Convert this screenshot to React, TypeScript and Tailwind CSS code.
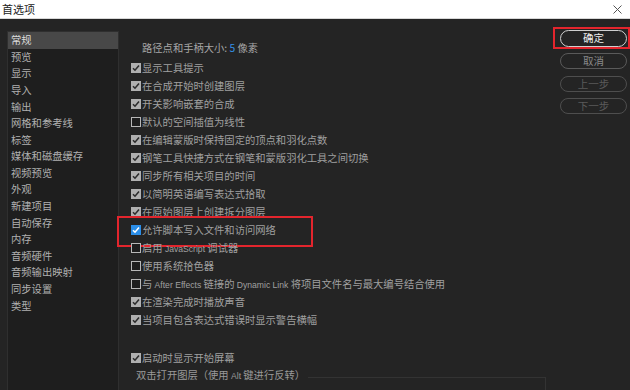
import React from "react";

type Row = { text: string; state: "on" | "off" | "blue" };

const rows: Row[] = [
  { text: "显示工具提示", state: "on" },
  { text: "在合成开始时创建图层", state: "on" },
  { text: "开关影响嵌套的合成", state: "on" },
  { text: "默认的空间插值为线性", state: "off" },
  { text: "在编辑蒙版时保持固定的顶点和羽化点数", state: "on" },
  { text: "钢笔工具快捷方式在钢笔和蒙版羽化工具之间切换", state: "on" },
  { text: "同步所有相关项目的时间", state: "on" },
  { text: "以简明英语编写表达式拾取", state: "on" },
  { text: "在原始图层上创建拆分图层", state: "on" },
  { text: "允许脚本写入文件和访问网络", state: "blue" },
  { text: "启用 JavaScript 调试器", state: "off" },
  { text: "使用系统拾色器", state: "off" },
  { text: "与 After Effects 链接的 Dynamic Link 将项目文件名与最大编号结合使用", state: "off" },
  { text: "在渲染完成时播放声音", state: "on" },
  { text: "当项目包含表达式错误时显示警告横幅", state: "on" },
];

const side = [
  "常规",
  "预览",
  "显示",
  "导入",
  "输出",
  "网格和参考线",
  "标签",
  "媒体和磁盘缓存",
  "视频预览",
  "外观",
  "新建项目",
  "自动保存",
  "内存",
  "音频硬件",
  "音频输出映射",
  "同步设置",
  "类型",
];

function Mixed({ text }: { text: string }) {
  const parts = text.split(/([A-Za-z][A-Za-z ]*[A-Za-z]|[A-Za-z])/);
  return (
    <>
      {parts.map((p, i) =>
        /^[A-Za-z]/.test(p) ? (
          <span
            key={i}
            className="text-[8.6px]"
            style={{ fontFamily: '"Liberation Sans", Arial, sans-serif' }}
          >
            {p}
          </span>
        ) : (
          <React.Fragment key={i}>{p}</React.Fragment>
        )
      )}
    </>
  );
}

function Box({ state }: { state: Row["state"] }) {
  if (state === "off") {
    return <div className="w-[10px] h-[10px] shrink-0 border border-[#b8b8b8] bg-[#1e1e1e]" />;
  }
  const blue = state === "blue";
  return (
    <div
      className={
        blue
          ? "w-[10px] h-[10px] shrink-0 bg-[#2b8ee8] flex items-center justify-center"
          : "w-[10px] h-[10px] shrink-0 bg-[#b0b0b0] flex items-center justify-center"
      }
    >
      <svg width="8" height="8" viewBox="0 0 8 8">
        <path
          d="M1 4.2 L3 6.2 L7 1.6"
          fill="none"
          stroke={blue ? "#ffffff" : "#2c2c2c"}
          strokeWidth="1.6"
        />
      </svg>
    </div>
  );
}

function CheckRow({ row, children }: { row: Row; children?: React.ReactNode }) {
  return (
    <div className="relative h-[18px] flex items-center gap-[1px]">
      <Box state={row.state} />
      <span className="whitespace-nowrap text-[#a0a0a0]">
        <Mixed text={row.text} />
      </span>
      {children}
    </div>
  );
}

export default function App() {
  return (
    <div
      className="w-[630px] h-[390px] overflow-hidden flex flex-col text-[10.3px] leading-none"
      style={{ fontFamily: '"Noto Sans CJK SC", "Noto Sans", sans-serif' }}
    >
      <div className="h-[19px] shrink-0 bg-white border-b border-[#d8d8d8] flex items-center justify-between pl-[2px] pr-[8px]">
        <span className="text-[11px] text-[#222]">首选项</span>
        <svg width="9" height="9" viewBox="0 0 9 9">
          <path d="M0.5 0.5 L8.5 8.5 M8.5 0.5 L0.5 8.5" stroke="#555" strokeWidth="1" />
        </svg>
      </div>
      <div className="flex-1 flex bg-[#242424] min-h-0">
        <div className="ml-[7px] mt-[12px] w-[112px] shrink-0 border border-[#2f2f2f] border-b-0 bg-[#1e1e1e] flex flex-col">
          {side.map((s, i) => (
            <div
              key={s}
              className={
                i === 0
                  ? "h-[16.6px] shrink-0 flex items-center pl-[3px] bg-[#484848] text-[#dcdcdc]"
                  : "h-[16.6px] shrink-0 flex items-center pl-[3px] text-[#b0b0b0]"
              }
            >
              {s}
            </div>
          ))}
        </div>
        <div className="flex-1 flex flex-col pl-[12px] pt-[20px] min-w-0">
          <div className="h-[18px] flex items-center pl-[11px] text-[#a6a6a6] whitespace-nowrap mb-[2px]">
            路径点和手柄大小:&nbsp;<span className="text-[#3391e8]">5</span>&nbsp;像素
          </div>
          {rows.map((r, i) => (
            <CheckRow key={i} row={r}>
              {r.state === "blue" && (
                <div className="absolute left-[-14px] top-[-5px] w-[196px] h-[31px] border-2 border-[#e3252d]" />
              )}
            </CheckRow>
          ))}
          <div className="h-[20px] shrink-0" />
          <CheckRow row={{ text: "启动时显示开始屏幕", state: "on" }} />
          <div className="flex items-start h-[20px] -ml-[7px]">
            <span className="whitespace-nowrap text-[#9a9a9a] pl-[12px] pr-[3px] mt-[3px]">
              <Mixed text="双击打开图层（使用 Alt 键进行反转）" />
            </span>
            <div className="w-[238px] h-[20px] mt-[10px] border-t border-r border-[#333333]" />
          </div>
        </div>
        <div className="w-[77px] shrink-0 pt-[8px] flex flex-col">
          <div className="w-[77px] h-[22px] border-2 border-[#e3252d] pl-[5px] pt-[1px]">
            <div className="w-[67px] h-[17px] rounded-full border border-[#cfcfcf] flex items-center justify-center text-[#ececec] text-[10.5px]">
              确定
            </div>
          </div>
          <div className="ml-[7px] mt-[4px] w-[67px] h-[16px] rounded-full border border-[#5a5a5a] flex items-center justify-center text-[#8a8a8a] text-[10.5px]">
            取消
          </div>
          <div className="ml-[7px] mt-[7px] w-[67px] h-[16px] rounded-full border border-[#4e4e4e] flex items-center justify-center text-[#5a5a5a] text-[10.5px]">
            上一步
          </div>
          <div className="ml-[7px] mt-[6px] w-[67px] h-[16px] rounded-full border border-[#4e4e4e] flex items-center justify-center text-[#5a5a5a] text-[10.5px]">
            下一步
          </div>
        </div>
      </div>
    </div>
  );
}
